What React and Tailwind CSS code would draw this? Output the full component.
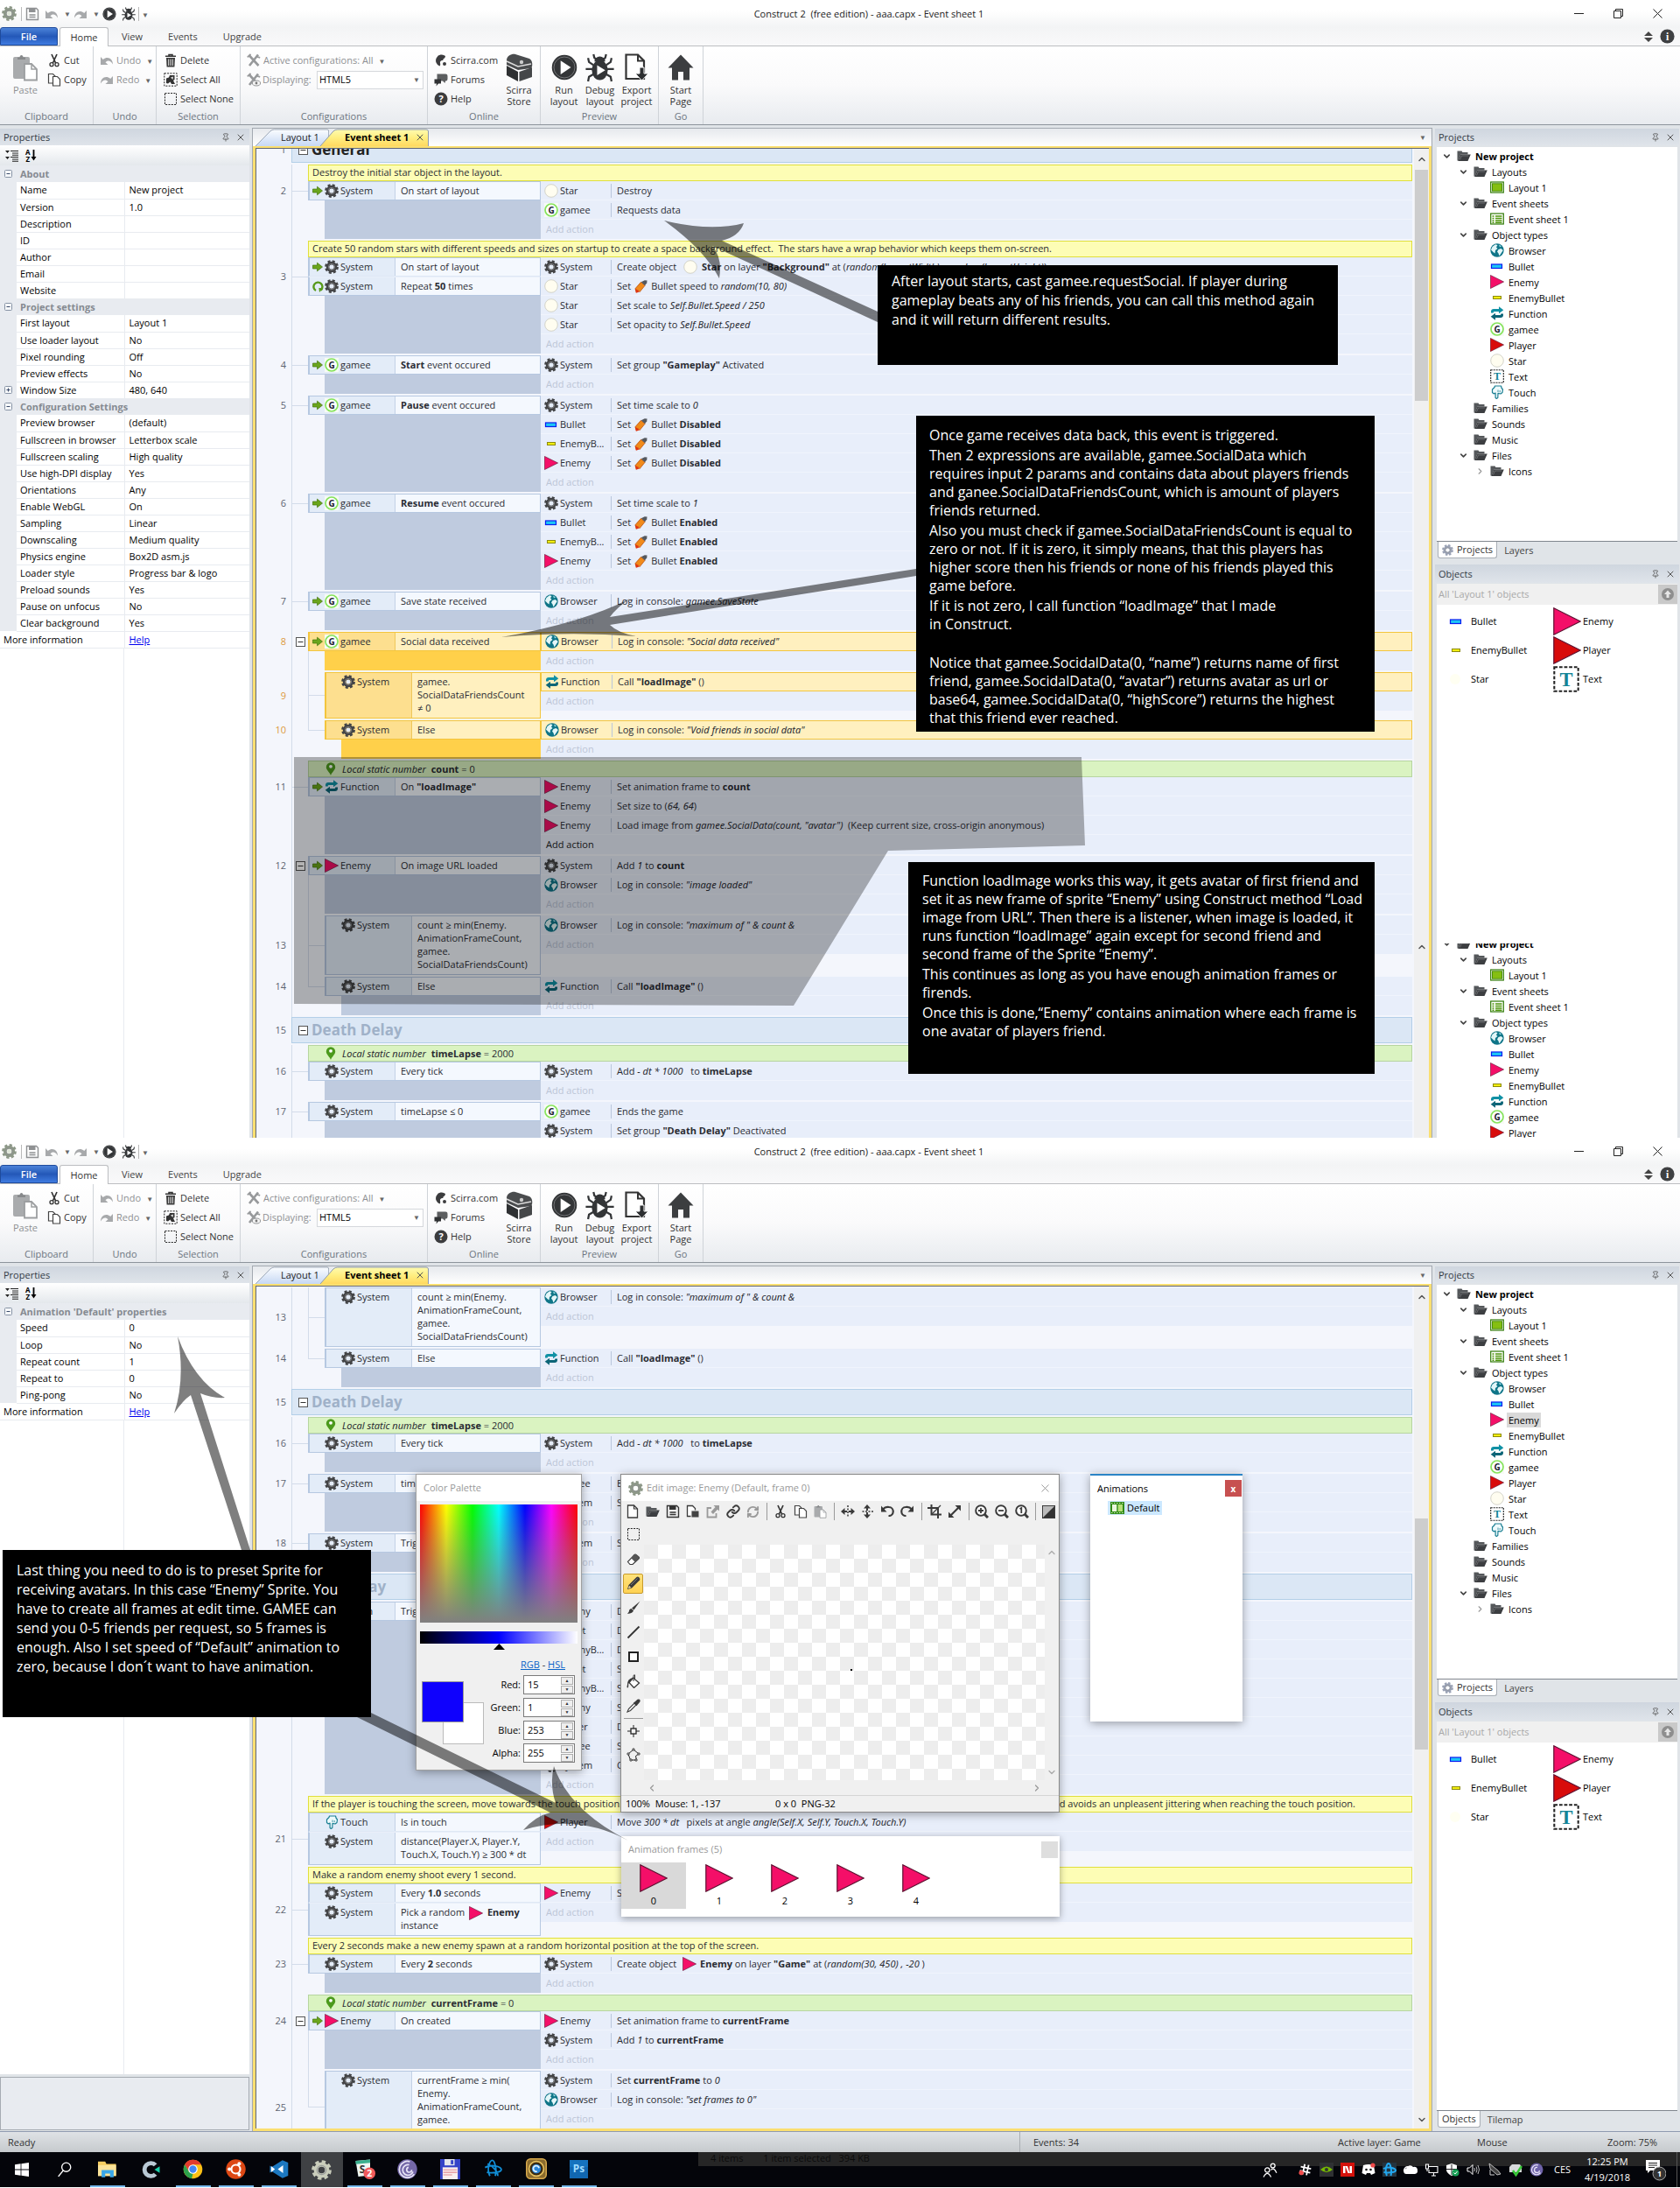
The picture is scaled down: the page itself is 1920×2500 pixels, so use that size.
import React from "react";
import {
  ChevronDown, ChevronLeft, ChevronRight, ChevronUp, Link as LinkIcon, RefreshCw, Pin, X,
} from "lucide-react";

/* ---------- drawing helpers ---------- */
const Svg = ({ w = 16, h = 16, vb = "0 0 16 16", className = "", children }) => (
  <svg width={w} height={h} viewBox={vb} className={"shrink-0 " + className} aria-hidden="true">{children}</svg>
);

const Gear = ({ size = 16, fill = "#434446", hole = "#e4ecf8", className = "" }) => (
  <Svg w={size} h={size} className={className}>
    <circle cx="8" cy="8" r="6.5" fill="none" stroke={fill} strokeWidth="2.8" strokeDasharray="2.9 2.2" />
    <circle cx="8" cy="8" r="4.4" fill="none" stroke={fill} strokeWidth="3.6" />
    <circle cx="8" cy="8" r="3.6" fill="none" stroke="#8f9194" strokeWidth="0.9" opacity="0.8" />
    <circle cx="8" cy="8" r="2.3" fill={hole} />
  </Svg>
);
const Star = () => <Svg><circle cx="8" cy="8" r="7.3" fill="#fffdf0" stroke="#cfcfc4" strokeWidth="0.9" /></Svg>;
const Gamee = () => (
  <Svg>
    <rect width="16" height="16" fill="#f7fbf5" />
    <circle cx="8" cy="8" r="7" fill="#fff" stroke="#86e35c" strokeWidth="1.7" />
    <text x="8" y="11.6" textAnchor="middle" fontSize="10" fontWeight="700" fontFamily="Open Sans, sans-serif" fill="#1d2333">G</text>
  </Svg>
);
const Bullet = () => <Svg><rect x="1.5" y="6" width="12" height="4.5" fill="#1cc6f5" stroke="#0a1cf0" strokeWidth="1.2" /></Svg>;
const EnemyBullet = () => <Svg><rect x="3.5" y="6.5" width="9" height="3" fill="#f2ee10" stroke="#8c8a0c" strokeWidth="1" /></Svg>;
const Tri = ({ fill = "#f40f68", size = 16, className = "" }) => (
  <Svg w={size} h={size} className={className}><path d="M.4.4 15.6 8 .4 15.6Z" fill={fill} stroke="#5c1030" strokeWidth="0.6" /></Svg>
);
const Enemy = (p) => <Tri {...p} />;
const Player = (p) => <Tri fill="#d80b0b" {...p} />;
const Globe = () => (
  <Svg>
    <circle cx="8" cy="8" r="7.7" fill="#0f7588" />
    <path d="M2.5 4 6 1.200 8.500 2 7 4.500 8.500 6 6 8 5.500 11.500 3.500 10 1 7.500Z" fill="#e3f6f8" />
    <path d="M9.500 7 12.500 6 14.800 8 12.500 11.500 10.500 14.500 9.500 11.500 8 9.500Z" fill="#e3f6f8" />
    <path d="M10 1.500 13 3.300 11 4.500Z" fill="#9bdae3" />
  </Svg>
);
const Func = () => (
  <Svg>
    <path d="M1 7.500V6C1 4 2.200 3 4 3H10V.3L15.300 4.300 10 8.300V6H5C4 6 3.800 6.500 3.800 7.500Z" fill="#1191a5" />
    <path d="M15 8.500V10c0 2-1.200 3-3 3H6V15.700L.7 11.700 6 7.700V10h5c1 0 1.200-.5 1.200-1.500Z" fill="#0c6577" />
  </Svg>
);
const TextObj = ({ size = 16 }) => (
  <Svg w={size} h={size}>
    <rect x="0.700" y="0.700" width="14.600" height="14.600" fill="#fff" stroke="#222" strokeWidth="1.100" strokeDasharray="2 1" />
    <text x="8" y="12.400" textAnchor="middle" fontSize="12" fontWeight="700" fontFamily="Liberation Serif, serif" fill="#128497">T</text>
  </Svg>
);
const Touch = () => (
  <Svg>
    <path d="M2.500 8.500V5L5 2.500 5.500 1h7l.7 2.500 1.300 1.500-.5 3.500-2 1.500-3-.6-.2 5.100-1.500.9-1.200-.9V9.200L4 9.800Z" fill="#eefafc" stroke="#1b7f93" strokeWidth="1.200" strokeLinejoin="round" />
    <path d="M9 8V5.500M11.200 8.200V6" stroke="#1b7f93" strokeWidth="0.800" />
  </Svg>
);
const Rocket = () => (
  <Svg className="mx-[4px] -my-[4px] inline" w={15} h={15}>
    <path d="M1 10.500 8 2.500 13 6.500 6.500 14.500 4.500 12.500 2.500 15Z" fill="#f08a1a" stroke="#b84a08" strokeWidth="0.800" />
    <path d="M1 10.500 4.500 12.500 6 14.500 2 15.800Z" fill="#e03612" />
    <path d="M8.300 2.300 12.500.3 15.500.5 15.200 3.500 12.800 6.600Z" fill="#55595f" />
  </Svg>
);
const Trigger = () => <Svg w={12} h={12} vb="0 0 12 12"><path d="M.5 4h5V1.200L11.500 6 5.500 10.800V8h-5Z" fill="#6aa51c" stroke="#44760c" strokeWidth="0.700" /></Svg>;
const Loop = () => (
  <Svg w={13} h={13} vb="0 0 13 13">
    <path d="M4 11A5 5 0 1 1 9.500 10.600" fill="none" stroke="#57991b" strokeWidth="2.400" /><path d="M12.500 8.200 8 13 7.400 8Z" fill="#57991b" />
  </Svg>
);
const MapPin = () => <Svg w={12} h={15} vb="0 0 12 15"><path d="M6 15C5 11.500 .8 9 .8 5.500A5.200 5.200 0 0 1 11.200 5.500C11.200 9 7 11.500 6 15Z" fill="#4c9a1d" /><circle cx="6" cy="4.800" r="1.900" fill="#fff" /></Svg>;
const Folder = () => (
  <Svg><path d="M.5 13.500V2.500h5l1 1.500h6v2.500H4.500L1.500 13.500Z" fill="#55585b" /><path d="M1.200 14 4.500 6.500H15.800L12.500 14Z" fill="#3c3e41" /><path d="M3.500 12.500 5.500 8H13" fill="none" stroke="#7c7e81" strokeWidth=".7" /></Svg>
);
const LayoutI = () => <Svg><rect x=".7" y="2" width="14.600" height="12" fill="#fff" stroke="#2f7a06" strokeWidth="1.200" /><rect x="2.500" y="3.800" width="11" height="8.400" fill="#85bf12" stroke="#4b9108" /></Svg>;
const SheetI = () => <Svg><rect x=".7" y="2" width="14.600" height="12" fill="#fff" stroke="#2f7a06" strokeWidth="1.200" /><path d="M2.500 5h2M6 5h7.500M2.500 7.500h2M6 7.500h7.500M2.500 10h2M6 10h7.500M2.500 12.200h2M6 12.200h7.500" stroke="#4d950a" strokeWidth="1.500" /></Svg>;

const PlayI = ({ size = 16 }) => (
  <Svg w={size} h={size}><circle cx="8" cy="8" r="7.600" fill="#333537" /><circle cx="8" cy="8" r="6.400" fill="none" stroke="#77797b" strokeWidth=".5" /><path d="M5.700 3.800 12 8 5.700 12.200Z" fill="#fff" /></Svg>
);
const BugI = ({ size = 16 }) => (
  <Svg w={size} h={size}>
    <path d="M4.500.5 5 2.500 6.500 3.500M11.500.5 11 2.500 9.500 3.500M1.500 2.500 2 4.800 4.500 6.500M14.500 2.500 14 4.800 11.500 6.500M.2 8.700H4M12 8.700h3.800M1.500 15.500 2 13 4.500 11.500M14.500 15.500 14 13 11.500 11.500" stroke="#333537" strokeWidth="1.100" fill="none" />
    <ellipse cx="8" cy="9.300" rx="4.400" ry="5.500" fill="#333537" /><path d="M5 4.500A3 2.800 0 0 1 11 4.500Z" fill="#333537" /><path d="M6.500 6.500 11 9.300 6.500 12.100Z" fill="#fff" />
  </Svg>
);
const UndoI = ({ flip = false }) => (
  <Svg className={flip ? "-scale-x-100" : ""}><path d="M1 4v9h8.500L6.500 10.300C9 7.500 12.500 8 15 12.500 15 6 9 2.500 3.800 7Z" fill="#a7a9ab" /></Svg>
);
const FloppyI = ({ fill = "#8f9193" }) => (
  <Svg><path d="M1.500 1.500H12.500L14.500 3.500V14.500H1.500Z" fill="none" stroke={fill} strokeWidth="1.400" /><rect x="4" y="1.500" width="7.500" height="4.500" fill={fill} /><path d="M4.500 9h7M4.500 11.500h7" stroke={fill} strokeWidth="1.300" /></Svg>
);
const PasteI = ({ w = 30, h = 32 }) => (
  <Svg w={w} h={h} vb="0 0 30 32"><rect x="1" y="4" width="19" height="25" rx="2" fill="#a9abad" /><path d="M6 7V4.500h2.500C8.500 1 12.500 1 12.500 4.500H15V7Z" fill="#87898b" /><path d="M14 12h8l6 6v12.500H14Z" fill="#fff" stroke="#9c9ea0" strokeWidth="1.800" /><path d="M22 12v6h6" fill="none" stroke="#9c9ea0" strokeWidth="1.500" /></Svg>
);
const CutI = ({ stroke = "#333" }) => (
  <Svg><path d="M5 1 9.600 11M11 1 6.400 11" stroke={stroke} strokeWidth="1.700" fill="none" /><circle cx="5" cy="12.700" r="2" fill="none" stroke={stroke} strokeWidth="1.300" /><circle cx="11" cy="12.700" r="2" fill="none" stroke={stroke} strokeWidth="1.300" /></Svg>
);
const CopyI = () => (
  <Svg><path d="M1.500 1.500h5l2.500 2.500v8H1.500Z" fill="#fff" stroke="#444" strokeWidth="1.200" /><path d="M6.500 4.500h5l3 3v7.500h-8Z" fill="#fff" stroke="#444" strokeWidth="1.200" /></Svg>
);
const TrashI = () => <Svg><path d="M2 3.300h12M6 3V1.500h4V3" stroke="#333" strokeWidth="1.500" fill="none" /><path d="M3 5h10l-.6 10.500H3.600Z" fill="#3a3a3a" /><path d="M5.700 6.500v7.500M8 6.500v7.500M10.300 6.500v7.500" stroke="#e8e8e8" strokeWidth="1" /></Svg>;
const SelAllI = () => <Svg><rect x=".8" y=".8" width="14.400" height="14.400" fill="none" stroke="#222" strokeDasharray="2 1.300" /><path d="M3 6.500 6 5.500 7 3H12.500V8L11 9 13 13H9L7.500 10.500 5 12.500 3 12Z" fill="#333" /><path d="M8 5.500 11 4.500 10.500 8Z" fill="#ddd" /></Svg>;
const SelNoneI = () => <Svg><rect x="1.500" y="1.500" width="13" height="13" fill="none" stroke="#222" strokeDasharray="2 1.300" /></Svg>;
const WrenchI = ({ eye = false }) => (
  <Svg>
    <path d="M2.500 2 13.500 14M13 1.500 3 14" stroke="#97999b" strokeWidth="2.600" fill="none" /><path d="M.8 4.300 4.500.8M10.500 3.500 15.200 4.800" stroke="#97999b" strokeWidth="1.800" />
    {eye && <><ellipse cx="11" cy="12" rx="4.600" ry="3" fill="#f4f4f4" stroke="#97999b" /><circle cx="11" cy="12" r="1.400" fill="#777" /></>}
  </Svg>
);
const ScirraI = () => <Svg><path d="M13 3A6.700 6.700 0 1 0 6.500 14.500C8.500 12 5.500 10.500 8 8.500 9.500 7.500 10.500 9 10.500 6.500 11.500 6 13 5 13 3Z" fill="#3b3c3e" /><circle cx="12" cy="12" r="2" fill="#3b3c3e" /></Svg>;
const ForumI = () => <Svg><path d="M3.500 1.500h9.500c2 0 2.500 1 2.500 3v2.500c0 2-1 2.500-2.500 2.500L12.500 12 10 9.500H6C4 9.500 3.500 8.500 3.500 7Z" fill="#5c5e60" /><path d="M.5 7.500H8v5H5L2.500 15.500 3 12.500H.5Z" fill="#2f3133" /></Svg>;
const HelpI = () => <Svg><circle cx="8" cy="8" r="7.500" fill="#3b3c3e" /><text x="8" y="12" textAnchor="middle" fontSize="11" fontWeight="700" fontFamily="Open Sans, sans-serif" fill="#fff">?</text></Svg>;
const ChestI = () => (
  <Svg w={31} h={33} vb="0 0 31 33"><path d="M1 8C1 2 8 0 11 1L27 6c4 2 4 9 2 11L14 19 1 13Z" fill="#4a4c4e" /><path d="M1 9 14 15 29 12" fill="none" stroke="#ddd" strokeWidth="1.500" /><path d="M1 14 14 21V32L1 25Z" fill="#2e3032" /><path d="M15.500 21 30 16V27L15.500 32Z" fill="#454749" /><circle cx="18" cy="10" r="2.200" fill="#ccc" /></Svg>
);
const ExportI = () => <Svg w={28} h={32} vb="0 0 28 32"><path d="M1.500 1.500H15L22 8.500V29H1.500Z" fill="#fff" stroke="#333" strokeWidth="2.200" /><path d="M15 1.500V8.500H22" fill="none" stroke="#333" strokeWidth="2" /><path d="M17 16h5v7h5L19.500 31 12 23h5Z" fill="#2c2e30" stroke="#fff" strokeWidth="1" /></Svg>;
const HomeI = () => <Svg w={30} h={30} vb="0 0 30 30"><path d="M15 .5 29.500 15.500H25V29.500H18V20H12V29.500H5V15.500H.5Z" fill="#3c3e40" /></Svg>;
const Caret = () => <span className="text-[8px] leading-none text-[#666]">▼</span>;

/* ---------- title bar and ribbon ---------- */
const Sep = () => <span className="h-4 w-px bg-[#b9b9b9]" />;
const TitleBar = () => (
  <header className="flex h-[31px] items-center bg-gradient-to-b from-white from-40% to-[#f3f4f5]">
    <div className="flex w-[204px] items-center pl-[2px]">
      <Gear size={17} fill="#8d9888" hole="#dfe6d8" />
      <span className="ml-[5px] mr-[4px] flex"><Sep /></span>
      <button aria-label="Save" className="flex w-[22px]"><FloppyI /></button>
      <button aria-label="Undo" className="flex w-[33px] items-center gap-[6px]"><UndoI /><Caret /></button>
      <button aria-label="Redo" className="flex w-[33px] items-center gap-[6px]"><UndoI flip /><Caret /></button>
      <button aria-label="Run layout" className="flex w-[22px]"><PlayI /></button>
      <button aria-label="Debug layout" className="mr-[3px] flex"><BugI /></button>
      <Sep /><span className="ml-[3px]"><Caret /></span>
    </div>
    <h1 className="flex-1 whitespace-pre text-center text-[#222]">Construct 2  (free edition) - aaa.capx - Event sheet 1</h1>
    <div className="flex w-[138px]">
      <button aria-label="Minimize" className="flex h-7 w-[45px] items-center justify-center"><Svg w={11} h={11} vb="0 0 11 11"><path d="M0 5.500h11" stroke="#222" /></Svg></button>
      <button aria-label="Restore" className="flex h-7 w-[45px] items-center justify-center"><Svg w={11} h={11} vb="0 0 11 11"><path d="M.5 2.500h8v8h-8ZM2.500 2.500v-2h8v8h-2" fill="none" stroke="#222" /></Svg></button>
      <button aria-label="Close" className="flex h-7 w-[45px] items-center justify-center"><Svg w={11} h={11} vb="0 0 11 11"><path d="M.5.5l10 10M10.500.5l-10 10" stroke="#222" /></Svg></button>
    </div>
  </header>
);

const RibbonTabs = () => (
  <nav className="flex h-[22px] items-stretch border-b border-[#bcbec1] bg-gradient-to-b from-[#f3f4f5] to-[#f9f9fa]">
    <button className="w-[66px] rounded-t-[3px] border border-[#1f4b9c] bg-gradient-to-b from-[#4b82d8] via-[#2458b8] to-[#3f7be0] font-semibold text-white">File</button>
    <button className="-mb-px ml-[2px] w-[56px] rounded-t-[3px] border border-b-0 border-[#bcbec1] bg-white text-[#333]">Home</button>
    <button className="px-[15px] text-[#444]">View</button>
    <button className="px-[14px] text-[#444]">Events</button>
    <button className="px-[15px] text-[#444]">Upgrade</button>
    <div className="ml-auto flex items-center gap-[8px] pr-[6px]">
      <Svg w={10} h={12} vb="0 0 10 12"><path d="M5 0 10 5H0ZM5 12 10 7H0Z" fill="#444" /></Svg>
      <Svg w={17} h={17}><circle cx="8" cy="8" r="7.600" fill="#3e4042" /><text x="8" y="12" textAnchor="middle" fontSize="11" fontWeight="700" fontFamily="Liberation Serif, serif" fill="#fff">i</text></Svg>
    </div>
  </nav>
);

const Group = ({ label, className, children }) => (
  <section className={"flex flex-col border-r border-[#cfd3d8] " + className}>
    <div className="flex h-[72px] pt-[5px]">{children}</div>
    <h2 className="text-center leading-[16px] text-[#6c7580]">{label}</h2>
  </section>
);
const Small = ({ icon, children, dim = false, caret = false }) => (
  <button className={"flex h-[22px] items-center gap-[3px] whitespace-nowrap text-left " + (dim ? "text-[#8e9093]" : "text-[#333]")}>
    {icon}<span>{children}</span>{caret && <span className="ml-[3px]"><Caret /></span>}
  </button>
);
const Big = ({ icon, a, b, dim = false, className }) => (
  <button className={"flex flex-col items-center whitespace-nowrap leading-[13px] " + className + (dim ? " text-[#8e9093]" : " text-[#333]")}>
    <span className="flex h-[38px] items-center">{icon}</span><span>{a}</span>{b && <span>{b}</span>}
  </button>
);

const Ribbon = ({ id }) => (
  <div className="flex h-[90px] border-b border-[#8d949c] bg-gradient-to-b from-white via-[#fafafb] to-[#e8ebef]">
    <Group label="Clipboard" className="w-[107px]">
      <Big icon={<PasteI />} a="Paste" dim className="ml-[10px] w-[38px]" />
      <div className="ml-[6px] flex flex-col"><Small icon={<CutI />}>Cut</Small><Small icon={<CopyI />}>Copy</Small></div>
    </Group>
    <Group label="Undo" className="w-[72px]">
      <div className="ml-[7px] flex flex-col"><Small dim caret icon={<UndoI />}>Undo</Small><Small dim caret icon={<UndoI flip />}>Redo</Small></div>
    </Group>
    <Group label="Selection" className="w-[96px]">
      <div className="ml-[8px] flex flex-col"><Small icon={<TrashI />}>Delete</Small><Small icon={<SelAllI />}>Select All</Small><Small icon={<SelNoneI />}>Select None</Small></div>
    </Group>
    <Group label="Configurations" className="w-[214px]">
      <div className="ml-[7px] flex flex-1 flex-col pr-[4px]">
        <Small dim caret icon={<WrenchI />}>Active configurations: All</Small>
        <div className="flex h-[22px] items-center text-[#8e9093]">
          <WrenchI eye /><label htmlFor={"display" + id} className="ml-[2px] w-[62px]">Displaying:</label>
          <span className="relative flex h-[21px] flex-1 items-center border border-[#d5d8dc] bg-white">
            <select id={"display" + id} className="w-full appearance-none bg-transparent pl-[2px] text-black"><option>HTML5</option></select>
            <span className="pointer-events-none absolute right-[3px] flex"><Caret /></span>
          </span>
        </div>
      </div>
    </Group>
    <Group label="Online" className="w-[129px]">
      <div className="ml-[7px] flex flex-col"><Small icon={<ScirraI />}>Scirra.com</Small><Small icon={<ForumI />}>Forums</Small><Small icon={<HelpI />}>Help</Small></div>
      <Big icon={<ChestI />} a="Scirra" b="Store" className="ml-auto mr-[8px] w-[32px]" />
    </Group>
    <Group label="Preview" className="w-[135px]">
      <Big icon={<PlayI size={30} />} a="Run" b="layout" className="ml-[6px] w-[41px]" />
      <Big icon={<BugI size={33} />} a="Debug" b="layout" className="w-[41px]" />
      <Big icon={<ExportI />} a="Export" b="project" className="w-[43px]" />
    </Group>
    <Group label="Go" className="w-[51px]"><Big icon={<HomeI />} a="Start" b="Page" className="flex-1" /></Group>
  </div>
);

/* ---------- properties ---------- */
const PanelHead = ({ children, tall = false }) => (
  <div className={"flex items-center bg-gradient-to-b from-[#cfd6df] to-[#dfe4ea] pl-[4px] pr-[4px] text-[#333a44] " + (tall ? "h-[21px]" : "h-[19px]")}>
    <h2 className="flex-1">{children}</h2>
    <button aria-label="Pin"><Pin size={10} strokeWidth={2} color="#555" /></button>
    <button aria-label="Close panel" className="ml-[6px]"><X size={12} strokeWidth={2} color="#555" /></button>
  </div>
);
const Toggle = ({ plus = false }) => (
  <Svg w={9} h={9} vb="0 0 9 9" className="mx-auto"><rect x=".5" y=".5" width="8" height="8" rx="1" fill="#f6f8fa" stroke="#8793a5" /><path d={plus ? "M2.500 4.500h4M4.500 2.500v4" : "M2.500 4.500h4"} stroke="#3a4a6a" /></Svg>
);
const Properties = ({ groups, footer }) => (
  <aside className="flex w-[285px] shrink-0 flex-col">
    <PanelHead>Properties</PanelHead>
    <div className="flex h-[23px] items-center gap-[8px] bg-gradient-to-b from-white to-[#e4e8ec] pl-[6px]">
      <button aria-label="Categorized"><Svg w={15} h={14} vb="0 0 15 14"><path d="M0 1h5L2.500 4ZM0 8h5L2.500 11Z" fill="#222" /><path d="M6 1.500h9M8 4h7M8 6.300h7M6 8.500h9M8 11h7M8 13.300h7" stroke="#222" strokeWidth="1.100" /></Svg></button>
      <button aria-label="Sort alphabetically" className="flex items-center">
        <span className="flex flex-col text-[8px] font-bold leading-[8px] text-black"><span>A</span><span>Z</span></span>
        <Svg w={7} h={15} vb="0 0 7 15"><path d="M3.500 1v10" stroke="#000" strokeWidth="1.800" /><path d="M.5 9h6l-3 4.500Z" /></Svg>
      </button>
    </div>
    <table className="w-full table-fixed border-collapse bg-white">
      <colgroup><col className="w-[19px]" /><col className="w-[123px]" /><col /></colgroup>
      <tbody>
        {groups.map(([title, rows]) => (
          <React.Fragment key={title}>
            <tr className="h-[19px] bg-[#e8ebf0]"><td className="p-0"><Toggle /></td><th colSpan={2} className="p-0 pl-[4px] text-left font-bold leading-[18px] text-[#858a91]">{title}</th></tr>
            {rows.map(([k, v, plus]) => (
              <tr key={k} className="h-[19px]">
                <td className="bg-[#e8ebf0] p-0">{plus && <Toggle plus />}</td>
                <th className="whitespace-nowrap border-b border-r border-[#e8ebf0] p-0 pl-[4px] text-left font-normal leading-[18px] text-black">{k}</th>
                <td className="whitespace-nowrap border-b border-[#e8ebf0] p-0 pl-[5px] leading-[18px] text-black">{v}</td>
              </tr>
            ))}
          </React.Fragment>
        ))}
        <tr className="h-[19px]">
          <th colSpan={2} className="border-b border-r border-[#e8ebf0] p-0 pl-[4px] text-left font-normal leading-[18px] text-black">More information</th>
          <td className="border-b border-[#e8ebf0] p-0 pl-[5px] leading-[18px]"><a href="#help" className="text-[#0000ee] underline">Help</a></td>
        </tr>
      </tbody>
    </table>
    <div className="flex flex-1 bg-white"><div className="w-[142px] border-r border-[#e8ebf0]" /></div>
    {footer && <div className="mb-px mt-[3px] h-[61px] border border-[#a6abb2] bg-[#e8ebf0]" />}
  </aside>
);

/* ---------- project tree and objects ---------- */
const TREE = [
  [0, "v", Folder, "New project"], [1, "v", Folder, "Layouts"], [2, "", LayoutI, "Layout 1"], [1, "v", Folder, "Event sheets"],
  [2, "", SheetI, "Event sheet 1"], [1, "v", Folder, "Object types"], [2, "", Globe, "Browser"], [2, "", Bullet, "Bullet"],
  [2, "", Enemy, "Enemy"], [2, "", EnemyBullet, "EnemyBullet"], [2, "", Func, "Function"], [2, "", Gamee, "gamee"],
  [2, "", Player, "Player"], [2, "", Star, "Star"], [2, "", TextObj, "Text"], [2, "", Touch, "Touch"], [1, "", Folder, "Families"],
  [1, "", Folder, "Sounds"], [1, "", Folder, "Music"], [1, "v", Folder, "Files"], [2, ">", Folder, "Icons"],
];
const INDENT = ["pl-[6px]", "pl-[25px]", "pl-[44px]"];
const Tree = ({ selected, count = TREE.length }) => (
  <ul>
    {TREE.slice(0, count).map(([lvl, ch, Icon, name]) => (
      <li key={name} className={"flex h-[18px] items-center " + INDENT[lvl]}>
        <span className="flex w-[17px] justify-start">
          {ch === "v" && <ChevronDown size={11} strokeWidth={3.500} color="#444" />}
          {ch === ">" && <ChevronRight size={11} strokeWidth={2.500} color="#999" />}
        </span>
        <Icon />
        <span className={"ml-[3px] whitespace-nowrap px-[2px] leading-[17px] text-black " + (lvl === 0 ? "font-bold " : "") + (name === selected ? "bg-[#d9d9d9]" : "")}>{name}</span>
      </li>
    ))}
  </ul>
);
const BottomTabs = ({ a, b, icon }) => (
  <div className="flex h-[20px] items-stretch border-t border-[#80868e]">
    <button className="ml-px flex items-center gap-[4px] rounded-b-[3px] border border-t-0 border-[#a9afb6] bg-white px-[4px] text-[#333]">{icon}{a}</button>
    <button className="px-[8px] text-[#444]">{b}</button>
  </div>
);
const Obj = ({ icon, name, slot }) => <li className="flex h-[33px] items-center"><span className={"flex " + slot}>{icon}</span><span className="text-black">{name}</span></li>;
const RightDock = ({ id, selected, children }) => (
  <aside className="flex w-[279px] shrink-0 flex-col">
    <PanelHead>Projects</PanelHead>
    <div className="mx-[2px] mt-[2px] h-[450px] bg-white pt-px"><Tree selected={selected} /></div>
    <div className="mx-[2px]"><BottomTabs a="Projects" b="Layers" icon={<Gear size={13} fill="#9aa2b5" hole="#fff" />} /></div>
    <div className="mt-[7px]"><PanelHead tall>Objects</PanelHead></div>
    <div className="mx-[2px] mt-px flex h-[24px] items-center bg-[#f0f0f0]">
      <input aria-label="Filter objects" id={"filter" + id} placeholder="All 'Layout 1' objects" className="min-w-0 flex-1 bg-transparent pl-[2px] placeholder:text-[#a8a8a8]" />
      <button aria-label="Up" className="flex h-[22px] w-[22px] items-center justify-center bg-[#c9c9c9]"><Svg><circle cx="8" cy="8" r="7" fill="#8e8e8e" /><path d="M8 3.500 12 8H9.500V12H6.500V8H4Z" fill="#e6e6e6" /></Svg></button>
    </div>
    <div className="mx-[2px] flex flex-1 flex-col bg-white">
      <ul className="grid grid-cols-[119px_1fr] pl-[14px] pt-[2px]">
        <Obj icon={<Bullet />} name="Bullet" slot="w-[25px]" /><Obj icon={<Enemy size={32} />} name="Enemy" slot="w-[34px]" />
        <Obj icon={<EnemyBullet />} name="EnemyBullet" slot="w-[25px]" /><Obj icon={<Player size={32} />} name="Player" slot="w-[34px]" />
        <Obj icon={<Svg><circle cx="7" cy="8" r="6" fill="#fffff2" /></Svg>} name="Star" slot="w-[25px]" /><Obj icon={<TextObj size={30} />} name="Text" slot="w-[34px]" />
      </ul>
      {children}
    </div>
  </aside>
);

/* ---------- event sheet ---------- */
const Var = ({ children }) => <b className="font-bold">{children}</b>;
const OBJ = {
  System: <Gear />, Star: <Star />, gamee: <Gamee />, Bullet: <Bullet />, "EnemyB...": <EnemyBullet />, Enemy: <Enemy />,
  Player: <Player />, Browser: <Globe />, Function: <Func />, Touch: <Touch />,
};

const Num = ({ n, sel }) => (
  <span className={"flex w-[40px] shrink-0 items-center justify-end pr-[6px] " + (sel ? "text-[#dd9a3c]" : "text-[#5d6470]")}>{n}</span>
);
const Rail = ({ children }) => <span className="flex w-[19px] shrink-0 items-center justify-center border-l border-[#d3dcea]">{children}</span>;
const Connector = () => <span className="h-px w-full bg-[#d3dcea]" />;
const Minus = () => <Svg w={11} h={11} vb="0 0 11 11"><rect x=".5" y=".5" width="10" height="10" fill="#fff" stroke="#555" /><path d="M2.500 5.500h6" stroke="#333" /></Svg>;

const Cond = ({ obj, mark, sub, sel, first, last, multi, children }) => (
  <div className={"flex border-y border-l-2 border-r " + (sel ? "border-[#f3c53d]" : "border-x-[#b6c8e1] " + (first ? "border-t-[#b6c8e1] " : "border-t-[#e9eff9] ") + (last ? "border-b-[#b6c8e1]" : "border-b-[#dfe8f5]"))}>
    <div className={"flex w-[97px] shrink-0 gap-[2px] pt-[2px] leading-[16px] " + (sub ? "pl-[17px] " : "pl-[3px] ") + (sel ? "bg-[#fddf8f]" : "bg-[#e3ecf8]")}>
      {!sub && <span className="flex h-4 w-[12px] items-center">{mark === "t" ? <Trigger /> : mark === "l" ? <Loop /> : null}</span>}
      {OBJ[obj]}<span>{obj}</span>
    </div>
    <div className={"flex-1 whitespace-nowrap border-l pl-[6px] pt-[2px] leading-[15px] " + (multi ? "pb-[4px] " : "pb-[3px] ") + (sel ? "border-[#eec75a] bg-[#fff0bf]" : "border-[#c3d1e6] bg-[#f4f8fe]")}>{children}</div>
  </div>
);
const Act = ({ obj, sel, children }) => (
  <div className={"flex h-[22px] items-center whitespace-pre pl-[4px] " + (sel ? "border border-[#f3c53d] bg-[#fff0bf]" : "border-b border-[#f0f4fc] bg-[#e8eefa]")}>
    {OBJ[obj]}<span className="ml-[2px] w-[58px] shrink-0">{obj}</span>
    <span className="flex h-[16px] items-center border-l border-[#b9c6dc] pl-[6px]"><span>{children}</span></span>
  </div>
);
const AddAction = ({ dark }) => <button className={"flex h-[22px] w-full items-center bg-[#e8eefa] pl-[6px] " + (dark ? "text-[#222]" : "text-[#bcc5d6]")}>Add action</button>;

const Event = ({ n, conds, acts, sub, lastSub, parent, sel, minus, dark, open = true }) => (
  <div className="flex">
    <div className="flex w-[325px] shrink-0 flex-col">
      <div className="flex items-stretch">
        <Num n={n} sel={sel} />
        <Rail>{minus ? <Minus /> : sub ? null : <Connector />}</Rail>
        {sub && (
          <span className="flex w-[19px] shrink-0 flex-col">
            <span className="w-full flex-1 border-b border-l border-[#d3dcea]" />
            <span className={"w-full flex-1 " + (lastSub ? "" : "border-l border-[#d3dcea]")} />
          </span>
        )}
        <div className="min-w-0 flex-1">
          {conds.map(([obj, desc, mark, multi], i) => (
            <Cond key={i} obj={obj} mark={mark} sub={sub} sel={sel} multi={multi} first={i === 0} last={i === conds.length - 1}>{desc}</Cond>
          ))}
        </div>
      </div>
      <div className="flex min-h-[2px] flex-1">
        <span className="w-[40px]" /><Rail />
        {sub && <span className={"w-[19px] " + (lastSub ? "" : "border-l border-[#d3dcea]")} />}
        <span className={"w-[19px] " + (parent ? "border-l border-[#d3dcea]" : "")} />
        <span className={"mb-[2px] flex-1 " + (sel ? "bg-[#ffd04a]" : "bg-[#bfcbdf]")} />
      </div>
    </div>
    <div className="mb-[2px] min-w-0 flex-1">
      {acts.map(([obj, desc], i) => <Act key={i} obj={obj} sel={sel}>{desc}</Act>)}
      {open && <AddAction dark={dark} />}
    </div>
  </div>
);
const Comment = ({ children }) => (
  <div className="flex"><span className="w-[40px]" /><Rail /><p className="h-[19px] flex-1 whitespace-pre border border-[#e0df3c] bg-[#fdfdb5] pl-[4px] leading-[16px]">{children}</p></div>
);
const Local = ({ name, value }) => (
  <div className="flex"><span className="w-[40px]" /><Rail />
    <p className="flex h-[19px] flex-1 items-center border border-[#b7d5a0] bg-[#daf3c1] pl-[19px] leading-[17px]"><MapPin /><span className="ml-[7px] whitespace-pre"><i>Local static number  </i><Var>{name}</Var> = {value}</span></p>
  </div>
);
const Heading = ({ n, active, children }) => (
  <div className="flex pb-[2px]"><Num n={n} />
    <div className="flex h-[30px] flex-1 items-center gap-[4px] border border-[#b3cfe8] bg-[#dbe7f5] pl-[7px]"><Minus /><h3 className={"text-[17px] font-bold leading-[28px] " + (active ? "text-[#222]" : "text-[#9fb1c8]")}>{children}</h3></div>
  </div>
);

const BulletSet = ({ s }) => <>Set<Rocket />Bullet <Var>{s}</Var></>;
const E13 = ["System", <>count ≥ min(Enemy.<br />AnimationFrameCount,<br />gamee.<br />SocialDataFriendsCount)</>, "", true];
const Shared = () => (
  <>
    <Event n="13" sub conds={[E13]} acts={[["Browser", <>Log in console: <i>"maximum of " &amp; count &amp;</i></>]]} />
    <Event n="14" sub lastSub conds={[["System", "Else"]]} acts={[["Function", <>Call <Var>"loadImage"</Var> ()</>]]} />
    <Heading n="15">Death Delay</Heading>
    <Local name="timeLapse" value="2000" />
    <Event n="16" conds={[["System", "Every tick"]]} acts={[["System", <>Add <i>- dt * 1000  </i> to <Var>timeLapse</Var></>]]} />
  </>
);

const SheetOne = () => (
  <div className="-mb-[5px] -mt-[14px]">
    <Heading n="1" active>General</Heading>
    <Comment>Destroy the initial star object in the layout.</Comment>
    <Event n="2" conds={[["System", "On start of layout", "t"]]} acts={[["Star", "Destroy"], ["gamee", "Requests data"]]} />
    <Comment>Create 50 random stars with different speeds and sizes on startup to create a space background effect.  The stars have a wrap behavior which keeps them on-screen.</Comment>
    <Event n="3" conds={[["System", "On start of layout", "t"], ["System", <>Repeat <Var>50</Var> times</>, "l"]]}
      acts={[
        ["System", <span className="flex items-center">Create object <span className="mx-[5px] flex"><Star /></span><Var>Star</Var> on layer <Var>"Background"</Var> at (<i>random(LayoutWidth)</i> , <i>random(LayoutHeight)</i>)</span>],
        ["Star", <>Set<Rocket />Bullet speed to <i>random(10, 80)</i></>], ["Star", <>Set scale to <i>Self.Bullet.Speed / 250</i></>], ["Star", <>Set opacity to <i>Self.Bullet.Speed</i></>],
      ]} />
    <Event n="4" conds={[["gamee", <><Var>Start</Var> event occured</>, "t"]]} acts={[["System", <>Set group <Var>"Gameplay"</Var> Activated</>]]} />
    <Event n="5" conds={[["gamee", <><Var>Pause</Var> event occured</>, "t"]]} acts={[["System", <>Set time scale to <i>0</i></>], ["Bullet", <BulletSet s="Disabled" />], ["EnemyB...", <BulletSet s="Disabled" />], ["Enemy", <BulletSet s="Disabled" />]]} />
    <Event n="6" conds={[["gamee", <><Var>Resume</Var> event occured</>, "t"]]} acts={[["System", <>Set time scale to <i>1</i></>], ["Bullet", <BulletSet s="Enabled" />], ["EnemyB...", <BulletSet s="Enabled" />], ["Enemy", <BulletSet s="Enabled" />]]} />
    <Event n="7" conds={[["gamee", "Save state received", "t"]]} acts={[["Browser", <>Log in console: <i>gamee.SaveState</i></>]]} />
    <Event n="8" sel minus parent conds={[["gamee", "Social data received", "t"]]} acts={[["Browser", <>Log in console: <i>"Social data received"</i></>]]} />
    <Event n="9" sel sub conds={[["System", <>gamee.<br />SocialDataFriendsCount<br />≠ 0</>, "", true]]} acts={[["Function", <>Call <Var>"loadImage"</Var> ()</>]]} />
    <Event n="10" sel sub lastSub conds={[["System", "Else"]]} acts={[["Browser", <>Log in console: <i>"Void friends in social data"</i></>]]} />
    <Local name="count" value="0" />
    <Event n="11" dark conds={[["Function", <>On <Var>"loadImage"</Var></>, "t"]]}
      acts={[["Enemy", <>Set animation frame to <Var>count</Var></>], ["Enemy", <>Set size to (<i>64, 64</i>)</>], ["Enemy", <>Load image from <i>gamee.SocialData(count, "avatar")</i>  (Keep current size, cross-origin anonymous)</>]]} />
    <Event n="12" minus parent conds={[["Enemy", "On image URL loaded", "t"]]} acts={[["System", <>Add <i>1</i> to <Var>count</Var></>], ["Browser", <>Log in console: <i>"image loaded"</i></>]]} />
    <Shared />
    <Event n="17" open={false} conds={[["System", "timeLapse ≤ 0"]]} acts={[["gamee", "Ends the game"], ["System", <>Set group <Var>"Death Delay"</Var> Deactivated</>]]} />
  </div>
);

const SheetTwo = () => (
  <div className="-mb-[19px] pt-px">
    <Shared />
    <Event n="17" conds={[["System", "timeLapse ≤ 0"]]} acts={[["gamee", "Ends the game"], ["System", <>Set group <Var>"Death Delay"</Var> Deactivated</>]]} />
    <Event n="18" conds={[["System", "Trigger once"]]} acts={[["System", "Set"]]} />
    <Heading n="19">Gameplay</Heading>
    <Event n="20" conds={[["System", "Trigger once"]]} acts={[["Enemy", "Destroy"], ["Bullet", "Destroy"], ["EnemyB...", "Destroy"], ["Bullet", "Set"], ["EnemyB...", "Set"], ["Enemy", "Set"], ["Player", "Destroy"], ["gamee", "Set"], ["System", "Create"]]} />
    <Comment>If the player is touching the screen, move towards the touch position.  Only move if further than one step away from the touch, which makes the movement smooth and avoids an unpleasent jittering when reaching the touch position.</Comment>
    <Event n="21" conds={[["Touch", "Is in touch"], ["System", <>distance(Player.X, Player.Y,<br />Touch.X, Touch.Y) ≥ 300 * dt</>, "", true]]}
      acts={[["Player", <>Move <i>300 * dt  </i> pixels at angle <i>angle(Self.X, Self.Y, Touch.X, Touch.Y)</i></>]]} />
    <Comment>Make a random enemy shoot every 1 second.</Comment>
    <Event n="22" conds={[["System", <>Every <Var>1.0</Var> seconds</>], ["System", <>Pick a random <Tri className="mx-[2px] -my-[4px] inline" /> <Var>Enemy</Var><br />instance</>, "", true]]} acts={[["Enemy", "Spawn"]]} />
    <Comment>Every 2 seconds make a new enemy spawn at a random horizontal position at the top of the screen.</Comment>
    <Event n="23" conds={[["System", <>Every <Var>2</Var> seconds</>]]}
      acts={[["System", <span className="flex items-center">Create object <span className="mx-[4px] flex"><Enemy /></span><Var>Enemy</Var> on layer <Var>"Game"</Var> at (<i>random(30, 450) , -20</i> )</span>]]} />
    <Local name="currentFrame" value="0" />
    <Event n="24" minus parent conds={[["Enemy", "On created", "t"]]} acts={[["Enemy", <>Set animation frame to <Var>currentFrame</Var></>], ["System", <>Add <i>1</i> to <Var>currentFrame</Var></>]]} />
    <Event n="25" sub lastSub conds={[["System", <>currentFrame ≥ min(<br />Enemy.<br />AnimationFrameCount,<br />gamee.<span className="block h-[15px]" /></>, "", true]]}
      acts={[["System", <>Set <Var>currentFrame</Var> to <i>0</i></>], ["Browser", <>Log in console: <i>"set frames to 0"</i></>]]} />
  </div>
);

const DocTab = ({ active, children, className }) => (
  <button className={"relative flex h-[20px] items-center " + className + (active ? " font-bold text-black" : " text-[#222]")}>
    <svg viewBox="0 0 125 20" preserveAspectRatio="none" className="absolute inset-0 h-full w-full" aria-hidden="true">
      <defs>
        <linearGradient id="tabOn" x2="0" y2="1"><stop offset="0" stopColor="#fffbb0" /><stop offset=".5" stopColor="#ffee80" /><stop offset="1" stopColor="#ffd960" /></linearGradient>
        <linearGradient id="tabOff" x2="0" y2="1"><stop offset="0" stopColor="#fbfdff" /><stop offset="1" stopColor="#c6d8f4" /></linearGradient>
      </defs>
      <path d={active ? "M0 20 15 3Q17 1 20 1H122Q124.500 1 124.500 3V20" : "M0 20 25 3Q28 1 32 1H122Q124.500 1 124.500 3V20"} fill={active ? "url(#tabOn)" : "url(#tabOff)"} stroke="#8d99ab" />
    </svg>
    <span className="relative flex w-full items-center">{children}</span>
  </button>
);
const ScrollBar = ({ thumb, down, mid }) => (
  <div className="flex w-[17px] shrink-0 flex-col items-center bg-[#f0f0f0]">
    <span className="flex h-[24px] items-center"><ChevronUp size={12} strokeWidth={3} color="#555" /></span>
    <span className={"w-[15px] bg-[#cdcdcd] " + thumb} />
    <span className="flex-1" />
    {mid && <span className="flex h-[224px]"><ChevronUp size={12} strokeWidth={3} color="#555" /></span>}
    {down && <span className="flex h-[20px] items-center"><ChevronDown size={12} strokeWidth={3} color="#555" /></span>}
  </div>
);
const Doc = ({ children, thumb, down, mid, closed }) => (
  <main className="-mt-px mx-[3px] flex min-w-0 flex-1 flex-col border-x border-t border-[#a3a9b1] bg-white">
    <div className="flex h-[20px] bg-gradient-to-b from-[#e6e9ed] to-white pl-[3px]">
      <DocTab className="-mr-[10px] w-[84px] pl-[29px]">Layout 1</DocTab>
      <DocTab active className="w-[124px] pl-[28px]">Event sheet 1<X size={12} className="ml-auto mr-[4px]" color="#555" /></DocTab>
      <span className="ml-auto flex items-center pr-[6px]"><Caret /></span>
    </div>
    <div className={"flex border-l-[3px] border-r-[3px] border-t-2 border-[#fbdf70] " + (closed ? "border-b-[3px]" : "")}>
      <div className="flex min-w-0 flex-1 border-l border-t border-[#5f6675] bg-[#f4f6fc]">
        <div className="min-w-0 flex-1 overflow-hidden pr-[2px] [&_i]:font-['Noto_Sans']">{children}</div>
        <ScrollBar thumb={thumb} down={down} mid={mid} />
      </div>
    </div>
  </main>
);

/* ---------- floating windows ---------- */
const Channel = ({ label, value }) => (
  <div className="flex h-[26px] items-center justify-end">
    <label htmlFor={"ch" + label} className="mr-[3px] text-black">{label}:</label>
    <span className="flex h-[22px] w-[59px] items-center border border-[#7a7a7a] bg-white">
      <input id={"ch" + label} defaultValue={value} className="min-w-0 flex-1 pl-[4px] text-black" />
      <span className="flex w-[15px] flex-col gap-px pr-px">
        <button aria-label={label + " up"} className="flex h-[9px] items-center justify-center border border-[#adadad] bg-[#eee] text-[5px] leading-none">▲</button>
        <button aria-label={label + " down"} className="flex h-[9px] items-center justify-center border border-[#adadad] bg-[#eee] text-[5px] leading-none">▼</button>
      </span>
    </span>
  </div>
);
const Palette = () => (
  <section className="absolute left-[475px] top-[384px] w-[190px] border border-[#a0a0a0] bg-[#f0f0f0] pb-[6px] shadow-[0_2px_10px_rgba(0,0,0,0.35)]">
    <h2 className="h-[30px] bg-white pl-[8px] leading-[30px] text-[#999]">Color Palette</h2>
    <div className="mx-[4px] mt-[4px] h-[135px] bg-[linear-gradient(to_top,#808080,rgba(128,128,128,0)),linear-gradient(to_right,red,yellow,lime,cyan,blue,magenta,red)]" />
    <div className="mx-[4px] mt-[10px] h-[14px] bg-[linear-gradient(to_right,black,blue,white)]" />
    <div className="flex h-[8px] justify-center"><Svg w={13} h={7} vb="0 0 13 7"><path d="M6.500 0 13 7H0Z" /></Svg></div>
    <p className="mt-[8px] h-[18px] pr-[18px] text-right"><a href="#rgb" className="text-[#0a64c8] underline">RGB</a> - <a href="#hsl" className="text-[#0a64c8] underline">HSL</a></p>
    <div className="flex justify-between pl-[6px] pr-[7px]">
      <div className="relative h-[80px] w-[72px] pt-[9px]">
        <div className="absolute left-[24px] top-[33px] h-[48px] w-[47px] border border-[#bbb] bg-white" />
        <div className="relative h-[47px] w-[48px] border border-[#999] bg-[#0f01fd]" />
      </div>
      <div><Channel label="Red" value="15" /><Channel label="Green" value="1" /><Channel label="Blue" value="253" /><Channel label="Alpha" value="255" /></div>
    </div>
  </section>
);

const D = "#3a3a3a";
const TB = ({ label, children }) => <button aria-label={label} className="flex h-[24px] w-[23px] items-center justify-center">{children}</button>;
const TSep = () => <span className="my-[2px] ml-[4px] mr-[3px] w-px bg-[#9a9a9a]" />;
const FlipI = ({ v }) => <Svg className={v ? "rotate-90" : ""}><path d="M8 1v14" stroke={D} strokeWidth="1.500" strokeDasharray="2 1.500" /><path d="M0 8 4.500 4V7H7V9H4.500V12ZM16 8 11.500 4V7H9V9H11.500V12Z" fill={D} /></Svg>;
const NewI = () => <Svg><path d="M2.500 1H9.500L13.500 5V15H2.500Z" fill="#fff" stroke={D} strokeWidth="1.300" /><path d="M9.500 1V5H13.500" fill="none" stroke={D} strokeWidth="1.200" /></Svg>;
const OutI = () => <Svg><path d="M6 4H1.500V14.500H11.500V10" fill="none" stroke="#9a9a9a" strokeWidth="1.800" /><path d="M8.500 1H15V7.500L13 5.700 8 11 5.500 8.500 10.500 3Z" fill="#9a9a9a" /></Svg>;
const RotI = ({ flip }) => <Svg className={flip ? "-scale-x-100" : ""}><path d="M3 5.500Q6 2 10 3A5 5 0 0 1 9.500 13" fill="none" stroke={D} strokeWidth="2.200" /><path d="M1 1.500V8.500H7.500Z" fill={D} /></Svg>;
const CropI = () => <Svg><path d="M4.500 0V11.500H16M0 4H12V16" fill="none" stroke={D} strokeWidth="2" /><path d="M4.500 11.500 15 1" stroke={D} strokeWidth="1.200" /></Svg>;
const ResizeI = () => <Svg><path d="M3 13 13 3" stroke={D} strokeWidth="2.200" /><path d="M8.500 1H15V7.500ZM1 8.500V15H7.500Z" fill={D} /></Svg>;
const ZoomI = ({ d }) => <Svg><circle cx="7" cy="7" r="5.800" fill="#fff" stroke={D} strokeWidth="2" /><path d="M11 11 15 15" stroke={D} strokeWidth="3" /><path d={d} stroke={D} strokeWidth="1.800" fill="none" /></Svg>;
const EraserI = () => <Svg><path d="M1.500 11.500 9 3.500Q10 2.500 11 3.500L14 6Q15 7 14 8L7 14.500H4Z" fill="#fff" stroke={D} strokeWidth="1.100" /><path d="M5.500 7.500 9.500 3Q10.500 2.500 11 3L14 6Q15 7 14 8L10 12Z" fill="#555" /></Svg>;
const PencilI = () => <Svg><path d="M1 15 2.500 10 11.500 1Q13 0 14.500 1.500 16 3 15 4.500L6 13.500Z" fill={D} /><path d="M2 14 3 10.700 5.300 13Z" fill="#f6e3a6" /><path d="M5 10 12.500 2.500" stroke="#888" strokeWidth=".8" /></Svg>;
const BrushI = () => <Svg><path d="M15.500.5 8.500 10.500 6 8.500Z" fill={D} /><path d="M5.500 9 8 11Q7.500 14.500 1 15 3.500 12 3.200 10.500 4 9 5.500 9Z" fill={D} /></Svg>;
const FillI = () => <Svg><path d="M7.500 4 14.500 10 8.500 15.500 3 9.500Z" fill="#fff" stroke={D} strokeWidth="1.300" /><path d="M8 8V2Q8 .5 9.500 .8V6" fill="none" stroke={D} /><path d="M7 4Q1 5 1 12 0 15.500 1.200 15.500 2.500 15.500 2.200 11 3.500 8 7 6Z" fill={D} /></Svg>;
const PickI = () => <Svg><path d="M1 15 2.500 11.500 9 5 11 7 4.500 13.500Z" fill="#fff" stroke={D} strokeWidth="1.100" /><path d="M8 4.500 9.500 3.500 12.500 .8Q15 0 15.500 1.500 16 3 15 4L12.500 7 11.500 8.300Z" fill={D} /></Svg>;

const EditImage = () => (
  <section className="absolute left-[709px] top-[384px] w-[502px] border border-[#8a8a8a] bg-[#f0f0f0] shadow-[0_2px_10px_rgba(0,0,0,0.35)]">
    <header className="flex h-[30px] items-center bg-white pl-[8px] pr-[8px]">
      <Gear size={17} fill="#8d9888" hole="#fff" /><h2 className="ml-[4px] flex-1 text-[#999]">Edit image: Enemy (Default, frame 0)</h2>
      <button aria-label="Close image editor"><X size={15} strokeWidth={1.300} color="#888" /></button>
    </header>
    <div className="flex pl-[2px]">
      <TB label="New"><NewI /></TB><TB label="Open"><Folder /></TB><TB label="Save"><FloppyI fill="#333" /></TB>
      <TB label="Save copy"><Svg><path d="M1.500 1.500h6l3 3v9h-9Z" fill="#fff" stroke={D} strokeWidth="1.300" /><rect x="6" y="7" width="9" height="8" fill="#444" stroke="#eee" /></Svg></TB>
      <TB label="Export"><OutI /></TB><TB label="Link"><LinkIcon size={16} strokeWidth={2.800} color={D} /></TB><TB label="Reload"><RefreshCw size={15} strokeWidth={3} color="#999" /></TB><TSep />
      <TB label="Cut"><CutI /></TB><TB label="Copy"><CopyI /></TB><TB label="Paste"><PasteI w={15} h={16} /></TB><TSep />
      <TB label="Mirror"><FlipI /></TB><TB label="Flip"><FlipI v /></TB><TB label="Rotate left"><RotI /></TB><TB label="Rotate right"><RotI flip /></TB><TSep />
      <TB label="Crop"><CropI /></TB><TB label="Resize"><ResizeI /></TB><TSep />
      <TB label="Zoom in"><ZoomI d="M4 7h6M7 4v6" /></TB><TB label="Zoom out"><ZoomI d="M4 7h6" /></TB><TB label="Zoom 100%"><ZoomI d="M5.500 5 7.300 4V10" /></TB><TSep />
      <TB label="Background"><Svg w={15} h={15}><rect x=".5" y=".5" width="15" height="15" fill="#bbb" stroke="#333" /><path d="M15 1V15H1Z" fill="#333" /></Svg></TB>
    </div>
    <div className="flex">
      <div className="flex w-[26px] flex-col items-center pl-[2px] pr-px">
        {[["Select", <SelNoneI />], ["Erase", <EraserI />], ["Pencil", <PencilI />], ["Brush", <BrushI />],
          ["Line", <Svg><path d="M1.500 14.500 14.500 1.500" stroke="#333" strokeWidth="1.800" /></Svg>], ["Rectangle", <Svg><rect x="3" y="3" width="10" height="10" fill="#fff" stroke="#222" strokeWidth="2" /></Svg>],
          ["Fill", <FillI />], ["Pick colour", <PickI />]].map(([l, i]) => (
          <button key={l} aria-label={l} className="flex h-[28px] w-[23px] items-center">
            <span className={"flex h-[23px] w-[23px] items-center justify-center " + (l === "Pencil" ? "rounded-[2px] border border-[#c89b2c] bg-gradient-to-b from-[#ffe27a] to-[#ffd253]" : "")}>{i}</span>
          </button>
        ))}
        <span className="h-px w-[22px] bg-[#9a9a9a]" />
        <button aria-label="Origin" className="flex h-[27px] items-center"><Svg><rect x="5" y="5" width="6" height="6" fill="none" stroke="#222" strokeWidth="1.300" /><path d="M8 1v4M8 11v4M1 8h4M11 8h4" stroke="#222" /></Svg></button>
        <button aria-label="Collision polygon" className="flex h-[28px] items-center"><Svg><path d="M8 2 14 7 10.500 9.500 11.500 14H4.500L2 7Z" fill="none" stroke="#222" /><path d="M7 1h2v2H7ZM13 6h2v2h-2ZM10 13h2v2h-2ZM4 13h2v2H4ZM1 6h2v2H1Z" fill="#fff" stroke="#222" strokeWidth=".8" /></Svg></button>
      </div>
      <div className="flex min-w-0 flex-1 flex-col pt-[26px]">
        <div className="flex">
          <div className="flex h-[269px] w-[458px] items-center justify-center bg-[repeating-conic-gradient(#fff_0_25%,#ededed_0_50%)] bg-[size:32px_32px]"><span className="ml-[16px] mt-[17px] h-[2px] w-[2px] bg-black" /></div>
          <div className="flex flex-1 flex-col items-center justify-between py-[3px]"><ChevronUp size={12} color="#aaa" strokeWidth={2.500} /><ChevronDown size={12} color="#aaa" strokeWidth={2.500} /></div>
        </div>
        <div className="flex h-[17px] w-[458px] items-center justify-between px-[3px]"><ChevronLeft size={12} color="#999" strokeWidth={2.500} /><ChevronRight size={12} color="#999" strokeWidth={2.500} /></div>
      </div>
    </div>
    <footer className="flex h-[19px] items-center whitespace-pre border-t border-[#d5d5d5] pl-[5px] text-black"><span className="w-[171px]">100%  Mouse: 1, -137</span><span className="flex-1">0 x 0  PNG-32</span></footer>
  </section>
);
const Animations = () => (
  <section className="absolute left-[1246px] top-[384px] h-[283px] w-[174px] border-t-2 border-[#2b84c6] bg-white shadow-[0_2px_10px_rgba(0,0,0,0.35)]">
    <header className="flex h-[29px] items-center pl-[8px] pr-px"><h2 className="flex-1 text-black">Animations</h2><button aria-label="Close animations" className="flex h-[19px] w-[19px] items-center justify-center bg-[#c75050] text-[10px] font-bold text-white">x</button></header>
    <button className="ml-[20px] flex h-[16px] items-center gap-[3px] bg-[#cce8ff] px-[3px] text-black">
      <Svg w={16} h={14} vb="0 0 16 14"><rect width="16" height="14" fill="#2f8a14" /><rect x="2" y="3" width="5.300" height="8" fill="#eaf7dd" /><rect x="8.700" y="3" width="5.300" height="8" fill="#b6e07a" /><path d="M1 1.500h14M1 12.500h14" stroke="#cfeebb" strokeDasharray="1.500 1.500" /></Svg>Default
    </button>
  </section>
);
const Frames = () => (
  <section className="absolute left-[710px] top-[798px] w-[501px] bg-white pb-[9px] shadow-[0_2px_8px_rgba(0,0,0,0.35)]">
    <header className="flex h-[30px] items-center pl-[8px] pr-[2px]"><h2 className="flex-1 text-[#999]">Animation frames (5)</h2><button aria-label="Close frames" className="h-[19px] w-[19px] bg-[#dedede]" /></header>
    <div className="flex gap-px">
      {[0, 1, 2, 3, 4].map((f) => (
        <button key={f} className={"flex h-[53px] w-[74px] flex-col items-center pt-[2px] text-black " + (f === 0 ? "bg-[#d9d9d9]" : "")}><Tri size={32} /><span className="leading-[19px]">{f}</span></button>
      ))}
    </div>
  </section>
);

/* ---------- notes drawn over the screens ---------- */
const NOTE = "absolute whitespace-nowrap bg-black text-[16px] text-white";
const Arrow = ({ d, fill = "rgba(0,0,0,0.5)" }) => (
  <svg className="pointer-events-none absolute left-0 top-0 h-px w-px overflow-visible" aria-hidden="true"><path d={d} fill={fill} /></svg>
);

const Screen = ({ id, props, footer, selected, dock, status, doc, children }) => (
  <div className="relative bg-[#e0e4e8]">
    <TitleBar /><RibbonTabs /><Ribbon id={id} />
    <div className="flex pr-px pt-[4px]">
      <Properties groups={props} footer={footer} />
      {doc}
      <RightDock id={id} selected={selected}>{dock}</RightDock>
    </div>
    {status}
    {children}
  </div>
);

const PROPS_ONE = [
  ["About", [["Name", "New project"], ["Version", "1.0"], ["Description", ""], ["ID", ""], ["Author", ""], ["Email", ""], ["Website", ""]]],
  ["Project settings", [["First layout", "Layout 1"], ["Use loader layout", "No"], ["Pixel rounding", "Off"], ["Preview effects", "No"], ["Window Size", "480, 640", true]]],
  ["Configuration Settings", [["Preview browser", "(default)"], ["Fullscreen in browser", "Letterbox scale"], ["Fullscreen scaling", "High quality"], ["Use high-DPI display", "Yes"], ["Orientations", "Any"], ["Enable WebGL", "On"], ["Sampling", "Linear"], ["Downscaling", "Medium quality"], ["Physics engine", "Box2D asm.js"], ["Loader style", "Progress bar & logo"], ["Preload sounds", "Yes"], ["Pause on unfocus", "No"], ["Clear background", "Yes"]]],
];
const PROPS_TWO = [["Animation 'Default' properties", [["Speed", "0"], ["Loop", "No"], ["Repeat count", "1"], ["Repeat to", "0"], ["Ping-pong", "No"]]]];

/* ---------- task bar ---------- */
const Lt = ({ children, size = 9, fill = "#fff", x = 8, y = 11 }) => <text x={x} y={y} textAnchor="middle" fontSize={size} fontWeight="700" fontFamily="Open Sans, sans-serif" fill={fill}>{children}</text>;
const TASKS = [
  ["Start", <Svg><path d="M0 2.300 6.600 1.300V7.600H0ZM7.400 1.200 16 0V7.600H7.400ZM0 8.400H6.600V14.700L0 13.700ZM7.400 8.400H16V16L7.400 14.800Z" fill="#fff" /></Svg>, ""],
  ["Search", <Svg w={18} h={18}><circle cx="9.500" cy="5.500" r="4.500" fill="none" stroke="#fff" strokeWidth="1.200" /><path d="M6.500 8.800 1.500 15" stroke="#fff" strokeWidth="1.300" /></Svg>, ""],
  ["File Explorer", <Svg w={22} h={22}><path d="M0 2h6l1 2h8v10H0Z" fill="#f6cf62" /><path d="M0 5h15v9H0Z" fill="#fbe49a" /><path d="M3 15V9h10v6h-3v-3H6v3Z" fill="#3aa7e8" /></Svg>, "on"],
  ["Cinema", <Svg w={24} h={24}><path d="M13 3.500A6.500 6.500 0 1 0 13 12.500L10.500 10.500A3.300 3.300 0 1 1 10.500 5.500Z" fill="#b9c9d4" /><path d="M15 5.500V10.500L11 8Z" fill="#18d0a8" /></Svg>, ""],
  ["Chrome", <Svg w={23} h={23}><circle cx="8" cy="8" r="7.500" fill="#fbc116" /><path d="M1.500 4.300A7.500 7.500 0 0 1 14.500 4.300H8L4.800 9.800Z" fill="#e33b2e" /><path d="M1.500 4.300 4.800 9.900 8 11.500 7 15.400A7.500 7.500 0 0 1 1.500 4.300Z" fill="#2ba24c" /><circle cx="8" cy="8" r="3.700" fill="#fff" /><circle cx="8" cy="8" r="2.900" fill="#4285f4" /></Svg>, "on"],
  ["Ubuntu", <Svg w={23} h={23}><circle cx="8" cy="8" r="7.800" fill="#dd4814" /><circle cx="8" cy="8" r="3.500" fill="none" stroke="#fff" strokeWidth="1.500" /><circle cx="2.900" cy="8" r="1.400" fill="#fff" /><circle cx="10.700" cy="3.600" r="1.400" fill="#fff" /><circle cx="10.700" cy="12.400" r="1.400" fill="#fff" /></Svg>, "on"],
  ["VS Code", <Svg w={23} h={23}><path d="M11 .8 15.500 2.800V13.200L11 15.200 2.500 9.700 1 10.800V5.200L2.500 6.300Z" fill="#1c78c0" /><path d="M2 5.500 5 8 2 10.500ZM11.500 4.800V11.200L7.300 8Z" fill="#fff" /></Svg>, "on"],
  ["Construct 2", <Gear size={23} fill="#c9cdbb" hole="#3f4144" />, "active"],
  ["Slack", <Svg w={24} h={24}><path d="M1 2 12 1V13L3 14Z" fill="#eef6f2" /><path d="M1 2 12 1V3.500L1 4.500Z" fill="#3ab08f" /><Lt size={8} x={6} y={11} fill="#333">S</Lt><circle cx="11.500" cy="11.500" r="4.500" fill="#f25a5a" /><Lt size={7} x={11.500} y={14}>2</Lt></Svg>, "on"],
  ["BitTorrent", <Svg w={23} h={23}><circle cx="8" cy="8" r="7.800" fill="#7468a8" /><path d="M13.500 12A6.500 6.500 0 1 1 10 2M12.500 10A4.200 4.200 0 1 1 9.500 4.500M11.500 8.500A2 2 0 1 1 9 6.500" fill="none" stroke="#e8e4f6" strokeWidth="1.200" /></Svg>, "on"],
  ["Floppy", <Svg w={23} h={23}><path d="M0 0H16V16H0Z" fill="#3442c8" /><rect x="3.500" y="0" width="8" height="5" fill="#e3e5ec" /><rect x="8.500" y=".8" width="2" height="3.300" fill="#3442c8" /><rect x="2" y="6.500" width="12" height="9.500" fill="#fbeeee" /><path d="M2.500 8.500h11M2.500 10.500h11M2.500 12.500h7" stroke="#e28a92" strokeWidth=".8" /></Svg>, "on"],
  ["Battle.net", <Svg w={22} h={22}><path d="M5 14C2 8 5 1 7 1S11 9 9.500 14M1 7C6 4 14 6 14.500 8.500S7 12 2.500 11M3 4C8 6 12 11 11.500 14" fill="none" stroke="#118fd8" strokeWidth="1.300" /></Svg>, "on"],
  ["Hearthstone", <Svg w={24} h={24}><rect x=".5" y=".5" width="15" height="15" rx="3" fill="#8a6b2e" stroke="#d8aa4c" /><circle cx="8" cy="8" r="5.600" fill="#3a2a12" stroke="#e6c05e" strokeWidth="1.100" /><circle cx="8" cy="8" r="3.500" fill="#2b86d8" /><path d="M10 7.500A2.200 2.200 0 1 0 8.500 10" fill="none" stroke="#dff2ff" strokeWidth="1.200" /></Svg>, "on"],
  ["Photoshop", <Svg w={21} h={21}><rect width="16" height="16" fill="#1167b0" /><rect width="16" height="6" fill="#1a7cc8" opacity=".6" /><Lt size={9} fill="#9fdcff">Ps</Lt></Svg>, "on"],
];
const TRAY = [
  <Svg className="rotate-12"><rect x="5" y="2" width="1.800" height="12" fill="#fff" /><rect x="9.500" y="2" width="1.800" height="12" fill="#fff" /><rect x="2" y="5" width="12" height="1.800" fill="#fff" /><rect x="2" y="9.500" width="12" height="1.800" fill="#fff" /><circle cx="4" cy="12.500" r="2.700" fill="#f04a4a" /></Svg>,
  <Svg><rect width="16" height="16" fill="#2f3133" /><path d="M1 8Q8 1 15 8 8 14 1 8Z" fill="#76b900" /><circle cx="8" cy="8" r="2" fill="#2f3133" /></Svg>,
  <Svg><rect width="16" height="16" fill="#d4120c" /><path d="M3 12V4H5.500V12ZM10.500 12V4H13V12ZM5.500 4 8 4 10.500 12H8.500Z" fill="#fff" /></Svg>,
  <Svg><path d="M2 3Q8 1 14 3L15.500 12 11 14 10 12H6L5 14 .5 12Z" fill="#fff" /><circle cx="5.500" cy="8" r="1.300" fill="#111" /><circle cx="10.500" cy="8" r="1.300" fill="#111" /><circle cx="13" cy="3" r="2.600" fill="#f04a4a" /></Svg>,
  <Svg><rect width="16" height="16" fill="#24343f" /><path d="M5 15C2 8 5 1 7 1S11 9 9.500 15M1 7C6 4 14 6 15 8.500S7 12 1.500 11" fill="none" stroke="#22a8f0" strokeWidth="2" /></Svg>,
  <Svg><path d="M3.500 13A3 3 0 0 1 3 7 4.500 4.500 0 0 1 11 5 4 4 0 0 1 13 13Z" fill="#fff" /><path d="M1 10A4 4 0 0 1 6 5" fill="none" stroke="#fff" strokeWidth="1.500" /></Svg>,
  <Svg><path d="M4 4.500H15V11.500H5V8M8 15h5M10.500 12v3M1.500 2h3v5h-3ZM3 7v3" fill="none" stroke="#fff" strokeWidth="1.100" /></Svg>,
  <Svg><path d="M7 1 13 3V8C13 11 10 13.500 7 15 4 13.500 1 11 1 8V3Z" fill="#fff" /><path d="M7 2v12M1 7.500H13" stroke="#222" /><circle cx="11.500" cy="11.500" r="4" fill="#16a055" /><path d="M9.500 11.500 11 13 13.500 10" stroke="#fff" fill="none" /></Svg>,
  <Svg><path d="M1 6H3.500L7 2.500V13.500L3.500 10H1Z" fill="none" stroke="#fff" /><path d="M9 6Q10 8 9 10M11 4.500Q13 8 11 11.500M13 3Q16 8 13 13" fill="none" stroke="#bbb" /></Svg>,
  <Svg><path d="M2 1 12 9 15 13 11 14 3 7Z" fill="#444" stroke="#ddd" strokeWidth=".8" /><path d="M3 8V14H8" fill="none" stroke="#ccc" /></Svg>,
  <Svg><path d="M1 5 4 2H13L15 5V11H1Z" fill="#d8dadc" /><path d="M5 9 8.500 14 15 4" fill="none" stroke="#38c838" strokeWidth="2.600" /></Svg>,
  <Svg><circle cx="8" cy="8" r="7.500" fill="#6d62a8" /><path d="M12.500 11.500A5.500 5.500 0 1 1 10 3M11.500 9A3 3 0 1 1 9 5.500" fill="none" stroke="#e8e4f6" strokeWidth="1.300" /></Svg>,
];
const TASK_BG = { "": "", on: "border-b-2 border-[#76b9ed]", active: "bg-[#3f4144]" };
const TaskBar = () => (
  <footer className="relative flex h-[40px] bg-[#04050a] text-white">
    <div className="absolute left-[798px] right-0 top-0 h-[16px] whitespace-pre bg-[#262626] pl-[14px] leading-[13px] text-[#0b0b0b]">4 items        1 item selected   394 KB</div>
    <nav className="relative flex">
      {TASKS.map(([name, icon, state]) => (
        <span key={name} className="flex w-[49px] justify-center">
          <button aria-label={name} className={"flex items-center justify-center " + (state === "active" ? "w-[48px] " : "w-[40px] ") + TASK_BG[state]}>{icon}</button>
        </span>
      ))}
    </nav>
    <div className="relative ml-auto flex items-center">
      <span className="mr-[20px] flex"><Svg w={17} h={17}><circle cx="5" cy="8" r="2.500" fill="none" stroke="#fff" strokeWidth="1.200" /><path d="M1 15.500Q5 8 9 15.500" fill="none" stroke="#fff" strokeWidth="1.200" /><circle cx="11" cy="3.300" r="2.300" fill="none" stroke="#fff" strokeWidth="1.200" /><path d="M9 8Q12 4.500 15 11" fill="none" stroke="#fff" strokeWidth="1.200" /></Svg></span>
      {TRAY.map((t, i) => <span key={i} className="flex w-[24px] justify-center">{t}</span>)}
      <span className="ml-[8px] w-[22px] text-[11px]">CES</span>
      <span className="ml-[8px] w-[62px] text-center text-[11px] leading-[18px]">12:25 PM<br />4/19/2018</span>
      <button aria-label="Notifications" className="mx-[12px]"><Svg w={24} h={26} vb="0 0 24 26"><path d="M1 2H17V14H6L3 17V14H1Z" fill="#fff" /><path d="M4 5.500h10M4 8h10M4 10.500h7" stroke="#222" /><circle cx="16.500" cy="17.500" r="7.500" fill="#333" stroke="#aaa" /><Lt size={9} x={16.500} y={21}>1</Lt></Svg></button>
      <span className="mr-[3px] h-full w-px bg-[#555]" />
    </div>
  </footer>
);

export default function App() {
  return (
    <div className="w-full overflow-hidden bg-[#e0e4e8] font-['Open_Sans','Noto_Sans',sans-serif] text-[11px] leading-[16px] text-[#2a2c33]">
      <Screen id="1" props={PROPS_ONE}
        dock={<div className="mt-auto h-[222px] overflow-hidden"><div className="-mt-[9px]"><Tree count={13} /></div></div>}
        doc={<Doc thumb="h-[264px]" mid><SheetOne /></Doc>}>
        <svg className="pointer-events-none absolute left-0 top-0 h-px w-px overflow-visible" aria-hidden="true"><path d="M336 865H1236L1240 966 1015 972 907 1149 336 1147Z" fill="rgba(0,0,0,0.3)" /></svg>
        <Arrow d="M759 252Q812 265 850 255 845 270 825 275L1003 356V368L814 281Q826 295 822 318 805 285 759 252Z" />
        <Arrow d="M573 728Q665 712 720 684 705 694 697 705L1047 650V658L697 714Q706 723 727 727 650 721 573 728Z" />
        <p className={NOTE + " left-[1003px] top-[303px] h-[114px] w-[526px] pl-[16px] pt-[7px] leading-[22px]"}>After layout starts, cast gamee.requestSocial. If player during<br />gameplay beats any of his friends, you can call this method again<br />and it will return different results.</p>
        <div className={NOTE + " left-[1047px] top-[475px] h-[361px] w-[524px] space-y-[2px] pl-[15px] pt-[12px] leading-[21px]"}>
          <p>Once game receives data back, this event is triggered.</p>
          <p>Then 2 expressions are available, gamee.SocialData which<br />requires input 2 params and contains data about players friends<br />and ganee.SocialDataFriendsCount, which is amount of players<br />friends returned.</p>
          <p>Also you must check if gamee.SocialDataFriendsCount is equal to<br />zero or not. If it is zero, it simply means, that this players has<br />higher score then his friends or none of his friends played this<br />game before.</p>
          <p>If it is not zero, I call function “loadImage” that I made<br />in Construct.</p>
          <p className="pt-[21px]">Notice that gamee.SocidalData(0, “name”) returns name of first<br />friend, gamee.SocidalData(0, “avatar”) returns avatar as url or<br />base64, gamee.SocidalData(0, “highScore”) returns the highest<br />that this friend ever reached.</p>
        </div>
        <div className={NOTE + " left-[1038px] top-[985px] h-[242px] w-[533px] space-y-[2px] pl-[16px] pt-[11px] leading-[21px]"}>
          <p>Function loadImage works this way, it gets avatar of first friend and<br />set it as new frame of sprite “Enemy” using Construct method “Load<br />image from URL”. Then there is a listener, when image is loaded, it<br />runs function “loadImage” again except for second friend and<br />second frame of the Sprite “Enemy”.</p>
          <p>This continues as long as you have enough animation frames or<br />firends.</p>
          <p>Once this is done,“Enemy” contains animation where each frame is<br />one avatar of players friend.</p>
        </div>
      </Screen>
      <Screen id="2" props={PROPS_TWO} footer selected="Enemy"
        dock={<div className="mt-auto bg-[#e0e4e8] pb-[4px]"><BottomTabs a="Objects" b="Tilemap" /></div>}
        doc={<Doc thumb="mt-[241px] h-[264px]" down closed><SheetTwo /></Doc>}
        status={
          <footer className="flex h-[24px] items-center border-t border-[#8f9ab0] bg-gradient-to-b from-[#dfe2e6] to-[#c6cacd] pl-[9px] text-[#333]">
            <span className="flex-1">Ready</span><span className="h-full w-[364px] border-l border-[#a9adb2] pl-[15px] leading-[23px]">Events: 34</span>
            <span className="w-[159px]">Active layer: Game</span><span className="w-[149px]">Mouse</span><span className="w-[83px]">Zoom: 75%</span>
          </footer>
        }>
        <Palette /><EditImage /><Animations /><Frames />
        <Arrow d="M203 227Q222 278 257 297 243 298 229 292L286 471H276L218 294Q209 300 199 315 212 275 203 227Z" />
        <Arrow d="M718 803Q650 768 633 718 628 740 635 760L424 657V661H406L629 771Q612 775 598 791 660 772 718 803Z" />
        <p className={NOTE + " left-[3px] top-[471px] h-[191px] w-[421px] pl-[16px] pt-[12px] leading-[22px]"}>Last thing you need to do is to preset Sprite for<br />receiving avatars. In this case “Enemy” Sprite. You<br />have to create all frames at edit time. GAMEE can<br />send you 0-5 friends per request, so 5 frames is<br />enough. Also I set speed of “Default” animation to<br />zero, because I don´t want to have animation.</p>
      </Screen>
      <TaskBar />
    </div>
  );
}
